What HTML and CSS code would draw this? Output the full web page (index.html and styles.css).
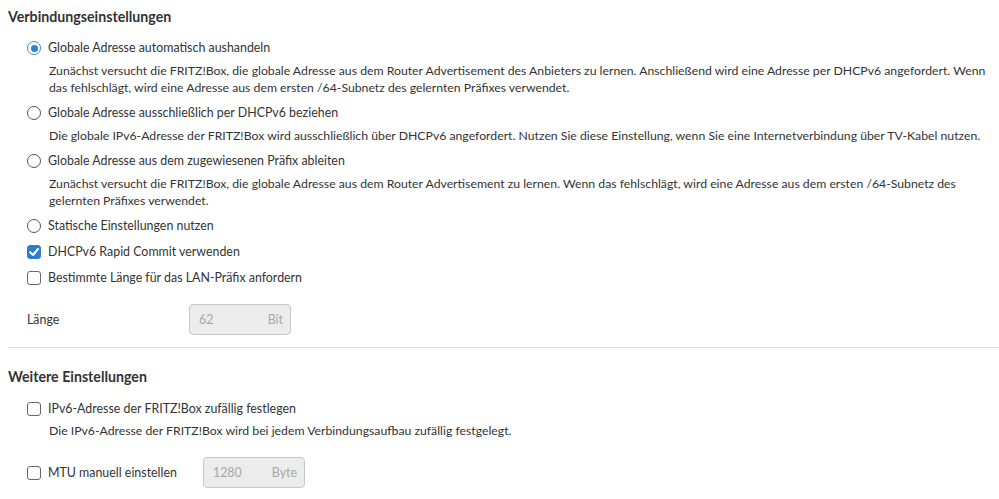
FILE: index.html
```html
<!DOCTYPE html>
<html lang="de">
<head>
<meta charset="utf-8">
<title>Verbindungseinstellungen</title>
<link rel="stylesheet" href="styles.css">
</head>
<body>
<section class="section">
  <h2 class="heading">Verbindungseinstellungen</h2>
  <div class="options">
    <div class="option">
      <div class="row"><span class="radio checked"></span><span class="label">Globale Adresse automatisch aushandeln</span></div>
      <p class="desc">Zunächst versucht die FRITZ!Box, die globale Adresse aus dem Router Advertisement des Anbieters zu lernen. Anschließend wird eine Adresse per DHCPv6 angefordert. Wenn das fehlschlägt, wird eine Adresse aus dem ersten /64-Subnetz des gelernten Präfixes verwendet.</p>
    </div>
    <div class="option">
      <div class="row"><span class="radio"></span><span class="label">Globale Adresse ausschließlich per DHCPv6 beziehen</span></div>
      <p class="desc">Die globale IPv6-Adresse der FRITZ!Box wird ausschließlich über DHCPv6 angefordert. Nutzen Sie diese Einstellung, wenn Sie eine Internetverbindung über TV-Kabel nutzen.</p>
    </div>
    <div class="option">
      <div class="row"><span class="radio"></span><span class="label">Globale Adresse aus dem zugewiesenen Präfix ableiten</span></div>
      <p class="desc">Zunächst versucht die FRITZ!Box, die globale Adresse aus dem Router Advertisement zu lernen. Wenn das fehlschlägt, wird eine Adresse aus dem ersten /64-Subnetz des gelernten Präfixes verwendet.</p>
    </div>
    <div class="option">
      <div class="row"><span class="radio"></span><span class="label">Statische Einstellungen nutzen</span></div>
    </div>
    <div class="option">
      <div class="row"><span class="check checked"><svg viewBox="0 0 14 14" width="14" height="14"><path d="M3.2 7.2 L6 10 L11 4" fill="none" stroke="#fff" stroke-width="2" stroke-linecap="round" stroke-linejoin="round"/></svg></span><span class="label">DHCPv6 Rapid Commit verwenden</span></div>
    </div>
    <div class="option">
      <div class="row"><span class="check"></span><span class="label">Bestimmte Länge für das LAN-Präfix anfordern</span></div>
    </div>
  </div>
  <div class="field-row">
    <span class="field-label">Länge</span>
    <div class="unit-input"><span class="val">62</span><span class="unit">Bit</span></div>
  </div>
</section>
<hr class="divider">
<section class="section">
  <h2 class="heading">Weitere Einstellungen</h2>
  <div class="options second">
    <div class="option">
      <div class="row"><span class="check"></span><span class="label">IPv6-Adresse der FRITZ!Box zufällig festlegen</span></div>
      <p class="desc">Die IPv6-Adresse der FRITZ!Box wird bei jedem Verbindungsaufbau zufällig festgelegt.</p>
    </div>
  </div>
  <div class="mtu-row">
    <span class="check"></span><span class="label mtu-label">MTU manuell einstellen</span>
    <div class="unit-input"><span class="val">1280</span><span class="unit">Byte</span></div>
  </div>
</section>
</body>
</html>
```

FILE: styles.css
```css
* { box-sizing: border-box; }
html, body { margin: 0; padding: 0; background: #fff; }
body {
  font-family: "Lato", "Liberation Sans", sans-serif;
  font-size: 12.4px;
  color: #333;
  padding-top: 7px;
}
.section { padding-left: 8px; }
.heading {
  margin: 0;
  font-size: 14.2px;
  font-weight: 700;
  line-height: 20px;
  color: #333;
}
.options {
  display: flex;
  flex-direction: column;
  gap: 6px;
  margin-top: 11px;
  padding-left: 19px;
}
.options.second { margin-top: 12px; }
.row {
  display: flex;
  align-items: center;
  height: 20px;
}
.label { margin-left: 7px; line-height: 20px; }
.radio {
  width: 14px; height: 14px;
  border: 1.5px solid #555;
  border-radius: 50%;
  flex: none;
  display: flex; align-items: center; justify-content: center;
}
.radio.checked { border-color: #3a8fd9; }
.radio.checked::after {
  content: "";
  width: 7px; height: 7px;
  border-radius: 50%;
  background: #2f7fd0;
}
.check {
  width: 14px; height: 14px;
  border: 1.3px solid #666;
  border-radius: 3px;
  flex: none;
  display: flex;
}
.check.checked { background: #2d7ccf; border-color: #2d7ccf; }
.check svg { margin: -1.3px; }
.desc {
  margin: 4px 0 1px 22px;
  font-size: 12.25px;
  line-height: 17px;
  max-width: 948px;
}
.options.second .desc { margin-top: 3px; }
.field-row {
  display: flex;
  align-items: center;
  margin-top: 16px;
  padding-left: 19px;
}
.field-label { width: 162px; }
.unit-input {
  width: 102px;
  height: 31px;
  border: 1px solid #c8c8c8;
  border-radius: 4px;
  background: #ececec;
  color: #a8a8a8;
  display: flex;
  align-items: center;
  justify-content: space-between;
  padding: 0 7px 0 9px;
  flex: none;
}
.divider {
  border: 0;
  border-top: 1px solid #dcdcdc;
  margin: 12px 0 19px 8px;
}
.mtu-row {
  display: flex;
  align-items: center;
  margin-top: 17px;
  padding-left: 19px;
}
.mtu-label { width: 155px; }
```
